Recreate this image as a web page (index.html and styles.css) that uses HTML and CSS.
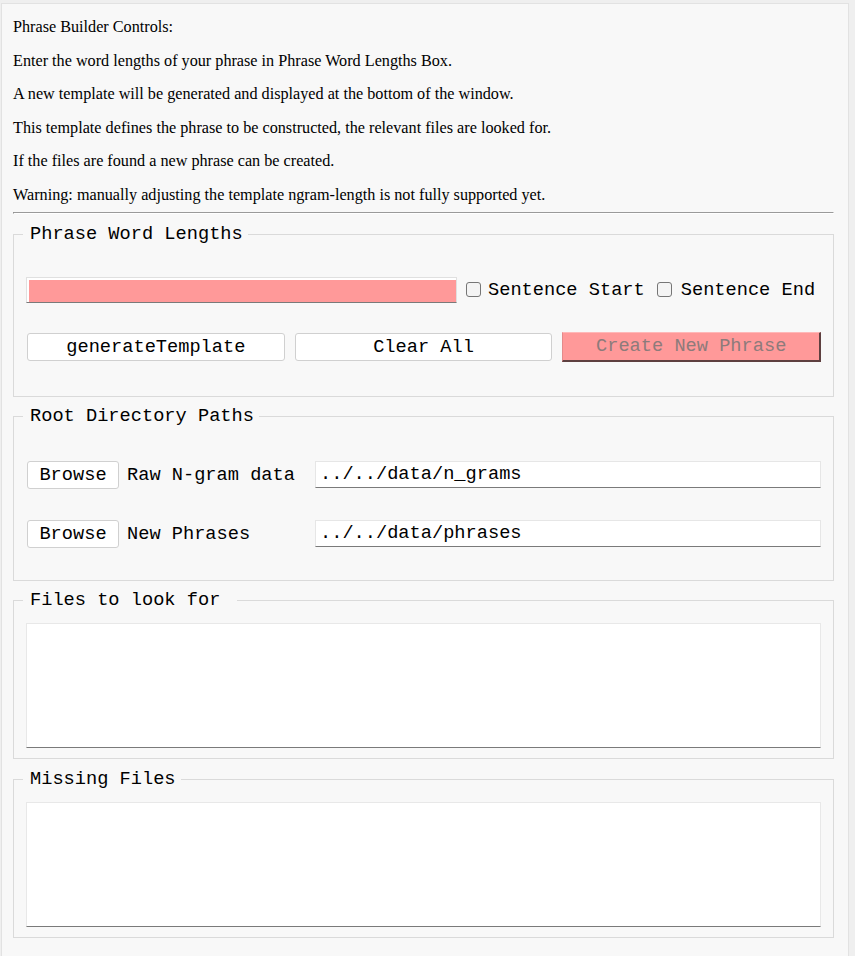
FILE: index.html
```html
<!DOCTYPE html>
<html>
<head>
<meta charset="utf-8">
<title>Phrase Builder</title>
<link rel="stylesheet" href="styles.css">
</head>
<body>
<div class="panel">
  <div class="intro">
    <div class="line">Phrase Builder Controls:</div>
    <div class="line">Enter the word lengths of your phrase in Phrase Word Lengths Box.</div>
    <div class="line">A new template will be generated and displayed at the bottom of the window.</div>
    <div class="line">This template defines the phrase to be constructed, the relevant files are looked for.</div>
    <div class="line">If the files are found a new phrase can be created.</div>
    <div class="line">Warning: manually adjusting the template ngram-length is not fully supported yet.</div>
  </div>
  <hr class="sep">

  <fieldset class="group group-phrase">
    <legend>Phrase Word Lengths</legend>
    <div class="row row-input">
      <div class="wl-box"><div class="wl-input"></div></div>
      <label class="check check-start"><span class="box"></span><span>Sentence Start</span></label>
      <label class="check check-end"><span class="box"></span><span>Sentence End</span></label>
    </div>
    <div class="row row-buttons">
      <button class="btn">generateTemplate</button>
      <button class="btn">Clear All</button>
      <button class="btn btn-create" disabled>Create New Phrase</button>
    </div>
  </fieldset>

  <fieldset class="group group-paths">
    <legend>Root Directory Paths</legend>
    <div class="row path-row">
      <button class="btn btn-browse">Browse</button>
      <span class="path-label">Raw N-gram data</span>
      <div class="text-field">../../data/n_grams</div>
    </div>
    <div class="row path-row path-row-2">
      <button class="btn btn-browse">Browse</button>
      <span class="path-label">New Phrases</span>
      <div class="text-field">../../data/phrases</div>
    </div>
  </fieldset>

  <fieldset class="group group-area">
    <legend>Files to look for&nbsp;</legend>
    <div class="area"></div>
  </fieldset>

  <fieldset class="group group-area group-last">
    <legend>Missing Files</legend>
    <div class="area"></div>
  </fieldset>
</div>
</body>
</html>
```

FILE: styles.css
```css
html, body {
  margin: 0;
  padding: 0;
}

body {
  background: #efefef;
  font-family: "Liberation Serif", "Times New Roman", serif;
  font-size: 16.2px;
  color: #000;
}

.panel {
  margin: 3px 6px 0 1px;
  background: #f8f8f8;
  border: 1px solid #e2e2e2;
  border-bottom: none;
  padding: 7px 14px 20px 11px;
  min-height: 960px;
  box-sizing: border-box;
}

.intro {
  margin-bottom: -1px;
}

.intro .line {
  line-height: 33.6px;
  white-space: nowrap;
}

.sep {
  height: 0;
  margin: 0;
  border-style: solid;
  border-width: 1px;
  border-color: #9a9a9a #ffffff #ffffff #8a8a8a;
}

.group {
  margin: 10px 0 0 0;
  border: 1px solid #dadada;
  padding: 0 12px 0 13px;
  font-family: "Liberation Mono", "Courier New", monospace;
  font-size: 18.67px;
  min-width: 0;
}

.group + .group {
  margin-top: 9px;
}

.group.group-last {
  margin-top: 10px;
}

.group legend {
  padding: 0 5px 0 7px;
  margin-left: -4px;
  line-height: 21px;
  white-space: pre;
}

.row {
  display: flex;
  align-items: center;
}

/* Phrase word lengths */
.group-phrase {
  padding-bottom: 34px;
}

.row-input {
  margin-top: 32px;
  margin-left: -1px;
}

.wl-box {
  width: 431px;
  box-sizing: border-box;
  background: #fff;
  border: 1px solid #e0e0e0;
  border-bottom-color: #7a7a7a;
  padding: 2px 0 0 2px;
  flex: none;
}

.wl-input {
  height: 22px;
  background: #ff9999;
}

.check {
  display: flex;
  align-items: center;
  white-space: pre;
}

.check .box {
  width: 13px;
  height: 13px;
  border: 1px solid #767676;
  border-radius: 3px;
  background: #f4f4f4;
  margin-right: 7px;
  flex: none;
}

.check-start {
  margin-left: 9px;
}

.check-end {
  margin-left: 12px;
}

.check-end .box {
  margin-right: 9px;
}

.row-buttons {
  margin-top: 29px;
  gap: 10px;
  height: 30px;
}

.btn {
  font-family: "Liberation Mono", "Courier New", monospace;
  font-size: 18.67px;
  color: #000;
  background: #fff;
  border: 1px solid #d0d0d0;
  border-radius: 3px;
  height: 28px;
  padding: 0 11px;
  margin: 0;
  line-height: 24px;
  white-space: pre;
}

.row-buttons .btn {
  flex: 1 1 0;
}

.btn-create {
  height: 30px;
  background: #ff9999;
  color: #8d7b7b;
  border-radius: 0;
  border-style: solid;
  border-width: 1px 2px 2px 1px;
  border-color: #ffb8b8 #5e4040 #5e4040 #e48a8a;
}

/* Root directory paths */
.group-paths {
  padding-bottom: 32px;
}

.path-row {
  margin-top: 34px;
  height: 28px;
}

.path-row-2 {
  margin-top: 31px;
}

.btn-browse {
  width: 92px;
  flex: none;
}

.path-label {
  width: 178px;
  margin-left: 8px;
  flex: none;
  white-space: pre;
}

.text-field {
  flex: 1;
  margin-left: 10px;
  height: 27px;
  box-sizing: border-box;
  background: #fff;
  border: 1px solid #e6e6e6;
  border-bottom-color: #7a7a7a;
  padding: 0 4px;
  line-height: 25px;
  white-space: pre;
}

/* Text areas */
.group-area {
  padding-bottom: 10px;
}

.area {
  margin-top: 12px;
  margin-left: -1px;
  height: 125px;
  box-sizing: border-box;
  background: #fff;
  border: 1px solid #e8e8e8;
  border-bottom-color: #7a7a7a;
}
```
